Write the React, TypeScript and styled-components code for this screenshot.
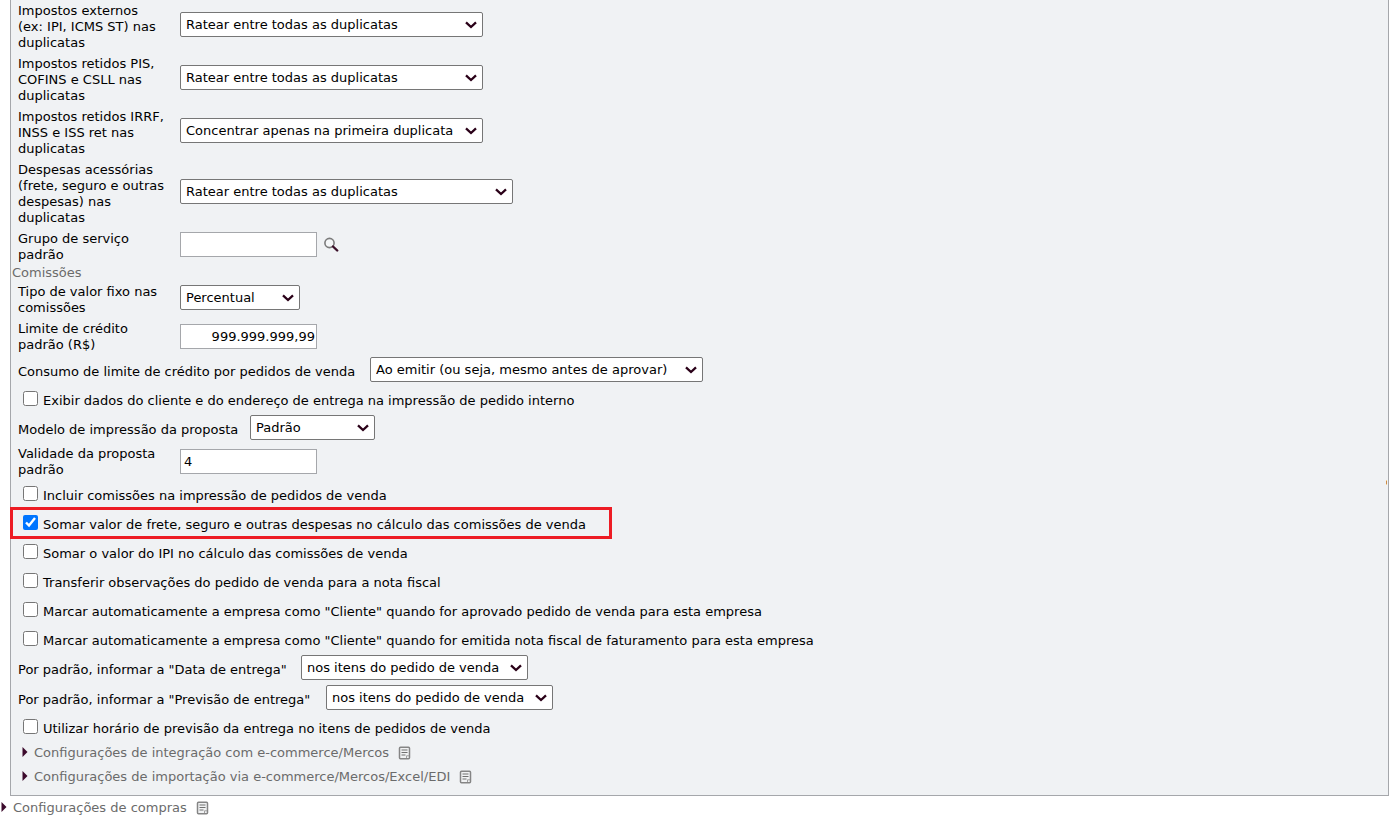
import React, { useId, useState } from "react";
import styled, { createGlobalStyle } from "styled-components";

const GlobalStyle = createGlobalStyle`
  body {
    margin: 0;
    background: #fff;
    color: #000;
    font: 13px/16px Verdana, "DejaVu Sans", sans-serif;
  }
`;

const Page = styled.main`
  overflow-x: hidden;
`;

const Panel = styled.section`
  position: relative;
  margin-left: 10px;
  padding: 2px 0 10px;
  border: 1px solid #a5a7ab;
  border-top: 0;
  background: #f0f2f4;
`;

const Rows = styled.div`
  display: flex;
  flex-direction: column;
  align-items: flex-start;
  gap: 5px;
  padding-left: 7px;
`;

const SectionTitle = styled.h2`
  margin: 3px 0 2px 1px;
  font: inherit;
  color: #6b6b6b;
`;

const FieldRow = styled.div`
  display: grid;
  grid-template-columns: 162px auto;
  align-items: center;
`;

const FieldLabel = styled.label`
  margin: 1px 0 -1px;
  white-space: pre-line;
`;

const Control = styled.div<{ $raised?: boolean }>`
  display: flex;
  align-items: center;
  gap: 7px;
  padding-bottom: ${(p) => (p.$raised ? 3 : 0)}px;
`;

const InlineRow = styled.div`
  display: flex;
  align-items: center;
  gap: 7px;
  white-space: nowrap;
`;

const InlineLabel = styled.label<{ $width: number }>`
  min-width: ${(p) => p.$width}px;
  padding-top: 4px;
`;

const SelectBox = styled.span`
  position: relative;
  display: flex;

  svg {
    position: absolute;
    top: 9px;
    right: 5px;
    pointer-events: none;
  }
`;

const NativeSelect = styled.select<{ $width: number }>`
  appearance: none;
  box-sizing: border-box;
  width: ${(p) => p.$width}px;
  height: 25px;
  padding: 1px 18px 1px 5px;
  border: 1px solid #767676;
  border-radius: 2px;
  background: #fff;
  color: #000;
  font: inherit;
`;

const TextInput = styled.input<{ $right?: boolean }>`
  box-sizing: border-box;
  width: 137px;
  height: 25px;
  padding: 1px ${(p) => (p.$right ? 1 : 3)}px 1px 3px;
  border: 1px solid #a5a7ab;
  background: #fff;
  font: inherit;
  text-align: ${(p) => (p.$right ? "right" : "left")};
`;

const IconButton = styled.button`
  display: flex;
  padding: 0;
  border: 0;
  background: none;
`;

const CheckList = styled.div`
  display: flex;
  flex-direction: column;
  align-items: flex-start;
  gap: 5px;
  margin-bottom: -1px;
`;

const CheckRow = styled.label<{ $highlight?: boolean }>`
  position: relative;
  display: flex;
  align-items: center;
  height: 24px;
  gap: 5px;
  padding-left: 5px;
  white-space: nowrap;

  &::after {
    content: ${(p) => (p.$highlight ? '""' : "none")};
    position: absolute;
    inset: -4px -26px -4px -8px;
    border: 3px solid #ed1c24;
  }
`;

const CheckBox = styled.input`
  width: 15px;
  height: 15px;
  margin: 0 0 1px;
  accent-color: #0075ff;
`;

const CheckText = styled.span`
  padding-top: 4px;
`;

const Toggles = styled.div`
  display: flex;
  flex-direction: column;
  gap: 8px;
  padding: 6px 0 0 11px;
`;

const Toggle = styled.button`
  display: flex;
  align-items: center;
  gap: 6px;
  padding: 0;
  border: 0;
  background: none;
  color: #6b6b6b;
  font: inherit;
  white-space: nowrap;
`;

const ToggleTitle = styled.span`
  padding-right: 3px;
`;

const Footer = styled.footer`
  padding: 4px 0 4px 1px;
`;

const Speck = styled.span`
  position: absolute;
  top: 480px;
  right: 1px;
  width: 1px;
  height: 5px;
  background: #c98a4b;
  border-block: 1px solid #f7cf8a;
  box-sizing: border-box;
`;

const Chevron = () => (
  <svg width="13" height="8" viewBox="0 0 13 8" aria-hidden="true">
    <path d="M1 1.300L6 6L11 1.300" fill="none" stroke="#2a0018" strokeWidth="2.300" />
  </svg>
);

const Arrow = () => (
  <svg width="6" height="12" viewBox="0 0 6 12" aria-hidden="true">
    <path d="M0.500 0v10l5-5z" fill="#3c0a2c" />
  </svg>
);

const Sheet = () => (
  <svg width="13" height="14" viewBox="0 0 13 14" aria-hidden="true">
    <rect x="1.500" y="1.200" width="10" height="11.600" rx="1" fill="#f1f2f3" stroke="#858585" strokeWidth="1.500" />
    <path d="M3.500 4h6M3.500 6.500h6M3.500 9h4" stroke="#707070" strokeWidth="1.200" />
    <path d="M8.500 12v-2.200h2.500" fill="none" stroke="#a0a0a0" />
  </svg>
);

const Magnifier = () => (
  <svg width="15" height="15" viewBox="0 0 15 15" aria-hidden="true">
    <circle cx="5.500" cy="6" r="4.600" fill="#f5f7f8" stroke="#7b7b7b" strokeWidth="1.600" />
    <path d="M9 9.500l4.200 4" stroke="#3b1029" strokeWidth="2.400" strokeLinecap="round" />
  </svg>
);

type SelectProps = { id: string; value: string; width: number };

const Select = ({ id, value, width }: SelectProps) => (
  <SelectBox>
    <NativeSelect id={id} $width={width}>
      <option>{value}</option>
    </NativeSelect>
    <Chevron />
  </SelectBox>
);

type SelectFieldProps = { label: string; value: string; width: number };

const SelectField = ({ label, value, width }: SelectFieldProps) => {
  const id = useId();
  return (
    <FieldRow>
      <FieldLabel htmlFor={id}>{label}</FieldLabel>
      <Control $raised>
        <Select id={id} value={value} width={width} />
      </Control>
    </FieldRow>
  );
};

const InlineSelect = ({ label, value, width, labelWidth }: SelectFieldProps & { labelWidth: number }) => {
  const id = useId();
  return (
    <InlineRow>
      <InlineLabel htmlFor={id} $width={labelWidth}>
        {label}
      </InlineLabel>
      <Select id={id} value={value} width={width} />
    </InlineRow>
  );
};

type TextFieldProps = { label: string; value?: string; right?: boolean; search?: boolean };

const TextField = ({ label, value = "", right, search }: TextFieldProps) => {
  const id = useId();
  return (
    <FieldRow>
      <FieldLabel htmlFor={id}>{label}</FieldLabel>
      <Control $raised={search}>
        <TextInput id={id} type="text" defaultValue={value} $right={right} />
        {search && (
          <IconButton type="button" aria-label="Pesquisar">
            <Magnifier />
          </IconButton>
        )}
      </Control>
    </FieldRow>
  );
};

const Check = ({ text, on = false, highlight }: { text: string; on?: boolean; highlight?: boolean }) => {
  const [checked, setChecked] = useState(on);
  return (
    <CheckRow $highlight={highlight}>
      <CheckBox type="checkbox" checked={checked} onChange={() => setChecked(!checked)} />
      <CheckText>{text}</CheckText>
    </CheckRow>
  );
};

const Section = ({ title }: { title: string }) => (
  <Toggle type="button">
    <Arrow />
    <ToggleTitle>{title}</ToggleTitle>
    <Sheet />
  </Toggle>
);

export default function App() {
  return (
    <Page>
      <GlobalStyle />
      <Panel>
        <Rows>
          <SelectField label={"Impostos externos\n(ex: IPI, ICMS ST) nas\nduplicatas"} value="Ratear entre todas as duplicatas" width={303} />
          <SelectField label={"Impostos retidos PIS,\nCOFINS e CSLL nas\nduplicatas"} value="Ratear entre todas as duplicatas" width={303} />
          <SelectField label={"Impostos retidos IRRF,\nINSS e ISS ret nas\nduplicatas"} value="Concentrar apenas na primeira duplicata" width={303} />
          <SelectField label={"Despesas acessórias\n(frete, seguro e outras\ndespesas) nas\nduplicatas"} value="Ratear entre todas as duplicatas" width={333} />
          <TextField label={"Grupo de serviço\npadrão"} search />
        </Rows>
        <SectionTitle>Comissões</SectionTitle>
        <Rows>
          <SelectField label={"Tipo de valor fixo nas\ncomissões"} value="Percentual" width={120} />
          <TextField label={"Limite de crédito\npadrão (R$)"} value="999.999.999,99" right />
          <InlineSelect label="Consumo de limite de crédito por pedidos de venda" labelWidth={345} value="Ao emitir (ou seja, mesmo antes de aprovar)" width={333} />
          <CheckList>
            <Check text="Exibir dados do cliente e do endereço de entrega na impressão de pedido interno" />
          </CheckList>
          <InlineSelect label="Modelo de impressão da proposta" labelWidth={225} value="Padrão" width={125} />
          <TextField label={"Validade da proposta\npadrão"} value="4" />
          <CheckList>
            <Check text="Incluir comissões na impressão de pedidos de venda" />
            <Check text="Somar valor de frete, seguro e outras despesas no cálculo das comissões de venda" on highlight />
            <Check text="Somar o valor do IPI no cálculo das comissões de venda" />
            <Check text="Transferir observações do pedido de venda para a nota fiscal" />
            <Check text={'Marcar automaticamente a empresa como "Cliente" quando for aprovado pedido de venda para esta empresa'} />
            <Check text={'Marcar automaticamente a empresa como "Cliente" quando for emitida nota fiscal de faturamento para esta empresa'} />
          </CheckList>
          <InlineSelect label={'Por padrão, informar a "Data de entrega"'} labelWidth={276} value="nos itens do pedido de venda" width={227} />
          <InlineSelect label={'Por padrão, informar a "Previsão de entrega"'} labelWidth={301} value="nos itens do pedido de venda" width={227} />
          <Check text="Utilizar horário de previsão da entrega no itens de pedidos de venda" />
        </Rows>
        <Toggles>
          <Section title="Configurações de integração com e-commerce/Mercos" />
          <Section title="Configurações de importação via e-commerce/Mercos/Excel/EDI" />
        </Toggles>
        <Speck />
      </Panel>
      <Footer>
        <Section title="Configurações de compras" />
      </Footer>
    </Page>
  );
}
